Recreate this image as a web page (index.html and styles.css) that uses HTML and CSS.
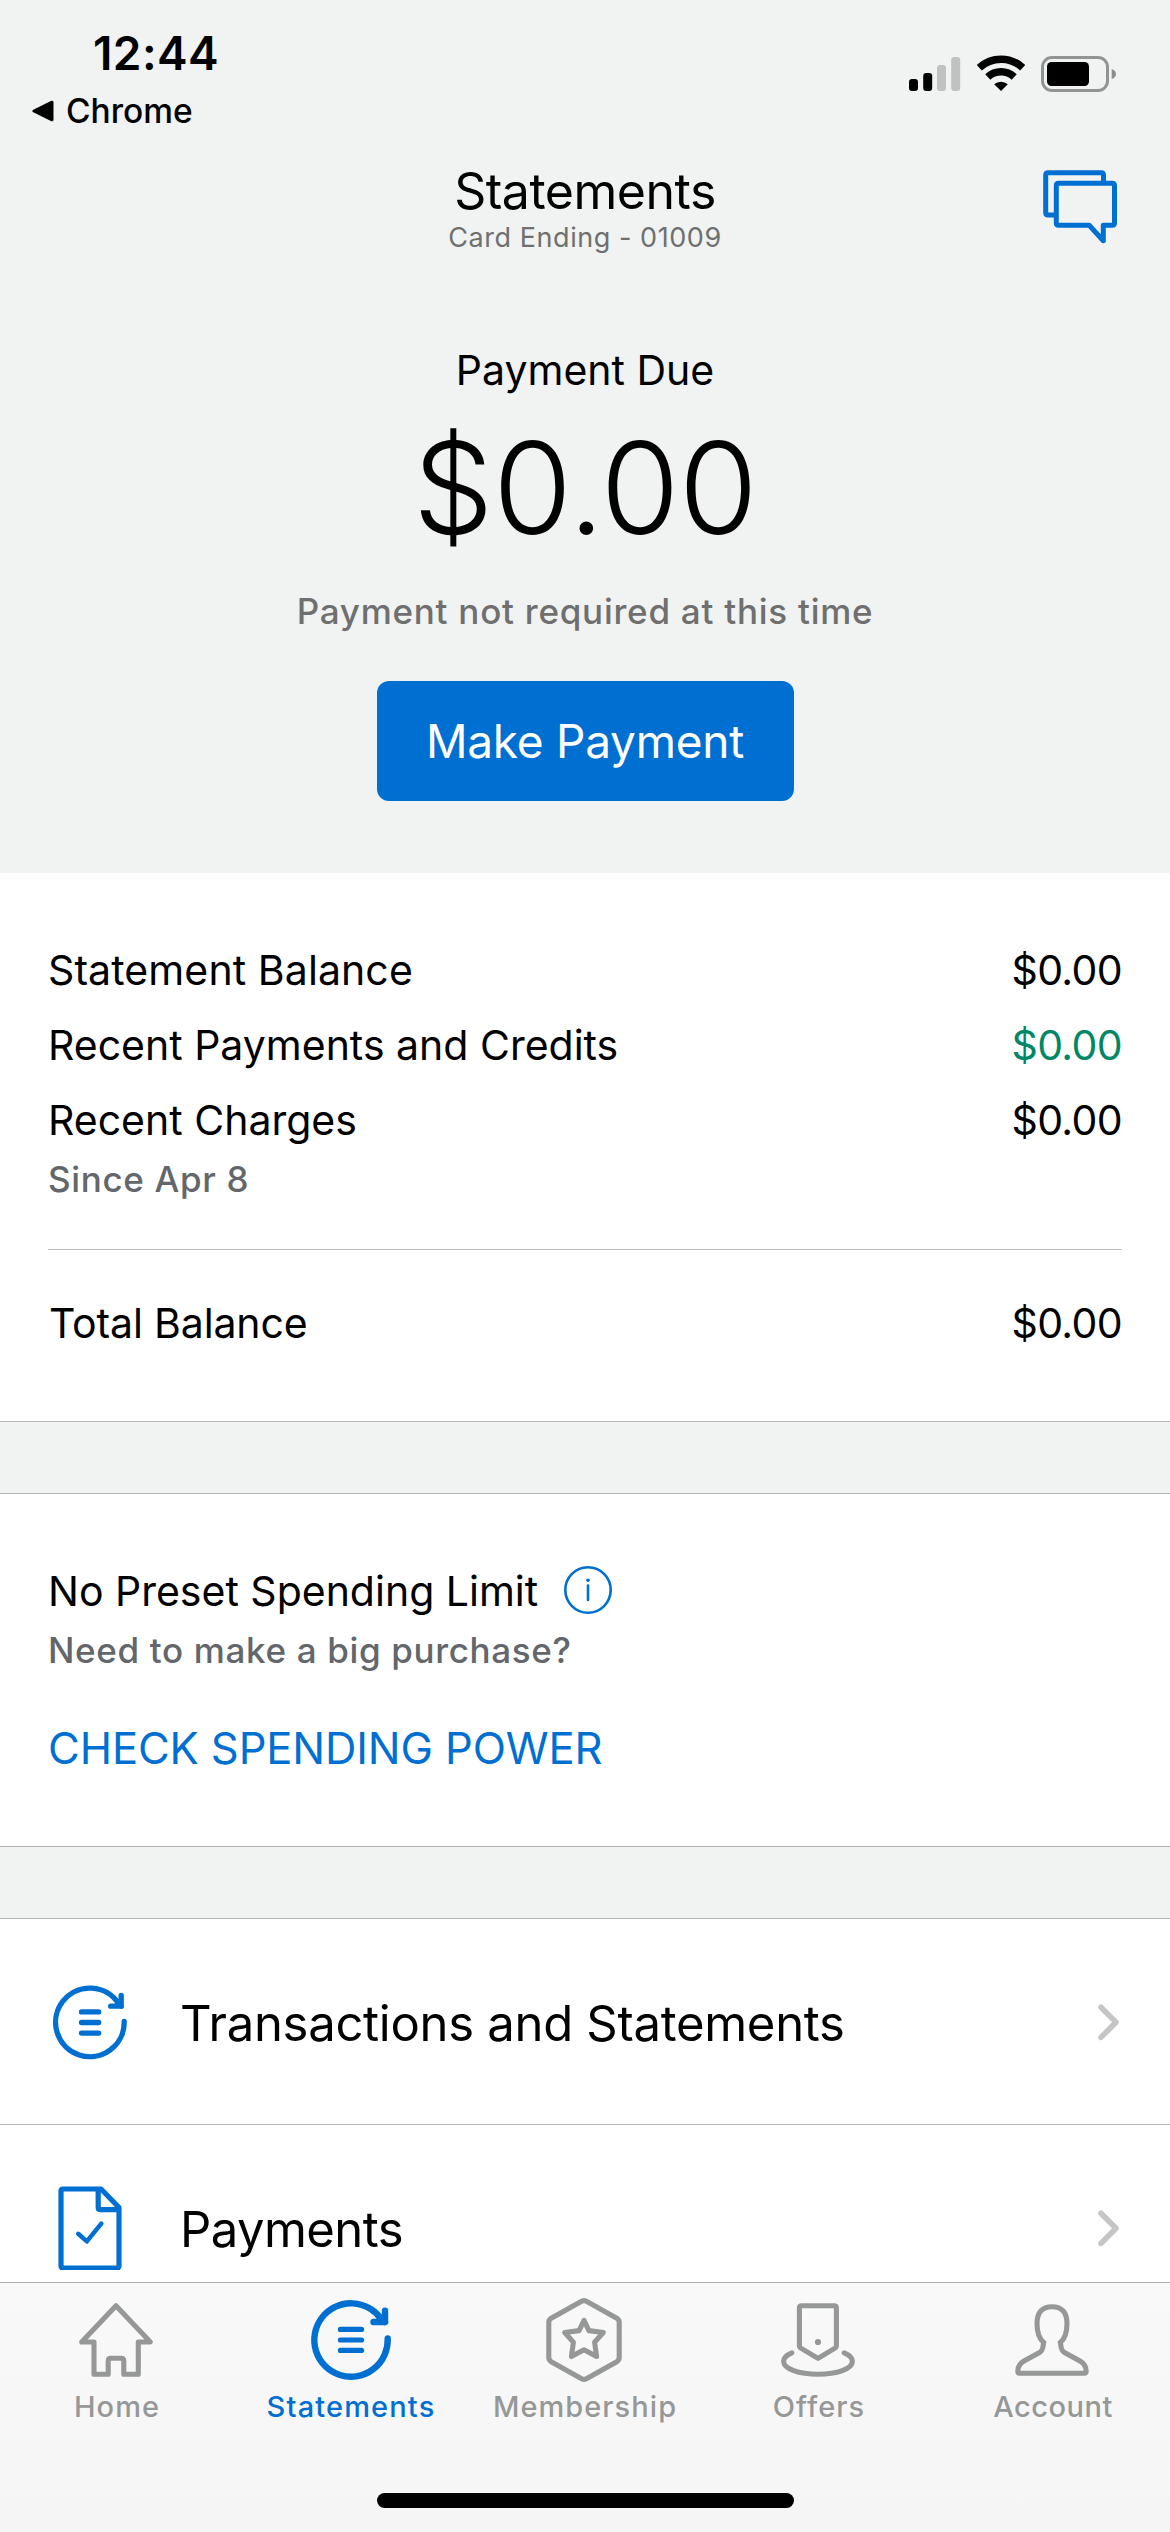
FILE: index.html
```html
<!DOCTYPE html>
<html lang="en">
<head>
<meta charset="utf-8">
<title>Statements</title>
<link rel="stylesheet" href="styles.css">
</head>
<body>
<div class="screen">
  <main class="content">
    <section class="hero">
      <div class="status">
        <div class="status-left">
          <div class="clock">12:44</div>
          <div class="back">
            <svg width="22" height="22" viewBox="0 0 22 22"><path d="M2 11L20 2.2V19.8Z" fill="#000" stroke="#000" stroke-width="3" stroke-linejoin="round"/></svg>
            <span>Chrome</span>
          </div>
        </div>
        <div class="status-right">
          <svg width="52" height="38" viewBox="0 0 52 38"><rect y="24" width="9" height="12" rx="3"/><rect x="14.2" y="18" width="9" height="18" rx="3"/><rect x="28" y="10" width="9" height="26" rx="3" fill="#c0c1c1"/><rect x="42.2" y="2" width="9" height="34" rx="3" fill="#c0c1c1"/></svg>
          <svg width="48" height="38" viewBox="0 0 48 38"><g fill="none" stroke="#000" stroke-width="7.5"><path d="M2.3 12.7A31.8 31.8 0 0 1 45.7 12.7"/><path d="M10.8 21.9A19.3 19.3 0 0 1 37.2 21.9"/></g><path d="M24 36L17.2 29.2A10.5 10.5 0 0 1 30.8 29.2Z"/></svg>
          <svg width="76" height="38" viewBox="0 0 76 38"><rect x="1.5" y="2.5" width="65" height="33" rx="9.5" fill="none" stroke="#929393" stroke-width="3"/><rect x="6" y="7" width="42" height="24" rx="4.5"/><path d="M70.7 14Q75 15.5 75 19T70.7 24Z" fill="#8c8d8d"/></svg>
        </div>
      </div>
      <header class="header">
        <div class="titles">
          <h1 class="title">Statements</h1>
          <p class="card-ending">Card Ending - 01009</p>
        </div>
        <svg class="chat" width="78" height="78" viewBox="0 0 78 78" fill="none" stroke="#006fd2" stroke-width="5" stroke-linejoin="round"><path d="M17.5 15.3H71.3Q73.5 15.3 73.5 17.5V55.1Q73.5 57.3 71.3 57.3H62.3V72.7L48.2 57.3H17.5Q15.3 57.3 15.3 55.1V17.5Q15.3 15.3 17.5 15.3Z"/><path d="M62.5 15.3V7Q62.5 4.7 60.2 4.7H7Q4.7 4.7 4.7 7V44.7Q4.7 47 7 47H15.3"/></svg>
      </header>
      <p class="due-label">Payment Due</p>
      <p class="due-amount">$0.00</p>
      <p class="due-note">Payment not required at this time</p>
      <button class="pay">Make Payment</button>
    </section>

    <section class="balances">
      <div class="row"><span class="statement">Statement Balance</span><span class="amount">$0.00</span></div>
      <div class="row"><span>Recent Payments and Credits</span><span class="amount credit">$0.00</span></div>
      <div class="row"><span>Recent Charges</span><span class="amount">$0.00</span></div>
      <p class="sub since">Since Apr 8</p>
      <hr class="rule">
      <div class="row total"><span>Total Balance</span><span class="amount">$0.00</span></div>
    </section>

    <section class="spending">
      <div class="limit">
        <span>No Preset Spending Limit</span>
        <svg width="48" height="48" viewBox="0 0 48 48"><circle cx="24" cy="24" r="22.7" fill="none" stroke="#006fd2" stroke-width="2.6"/><circle cx="24" cy="14.3" r="1.8" fill="#006fd2"/><path d="M24 19.5V34" stroke="#006fd2" stroke-width="2.6" stroke-linecap="round"/></svg>
      </div>
      <p class="sub">Need to make a big purchase?</p>
      <a class="link">CHECK SPENDING POWER</a>
    </section>

    <section class="menu">
      <div class="item">
        <svg width="84" height="84" viewBox="0 0 84 84" fill="none" stroke="#006fd2" stroke-width="5.3" stroke-linecap="round" stroke-linejoin="round"><path d="M76.2 41.5A34.3 34.3 0 1 1 71 24.2"/><path d="M73.2 15.5V26.2H62.7"/><path d="M70 23L73.2 26.2"/><path d="M33.5 31.9H50.7M33.5 42.5H50.7M33.5 53.1H50.7"/></svg>
        <span class="item-label">Transactions and Statements</span>
        <svg width="24" height="40" viewBox="0 0 24 40" fill="none" stroke="#c5c5c5" stroke-width="5.6" stroke-linecap="round" stroke-linejoin="round"><path d="M3 5.2L18 20.3L3 35.4"/></svg>
      </div>
      <div class="item">
        <svg width="84" height="84" viewBox="0 0 84 84" fill="none" stroke="#006fd2" stroke-width="5.2" stroke-linecap="round" stroke-linejoin="round"><path d="M15 3H53L71 21.5V80Q71 82 69 82H15Q13 82 13 80V5Q13 3 15 3Z"/><path d="M50.2 4V21.5Q50.2 23.7 52.4 23.7H70"/><path d="M30.2 47.8L38.8 55.4L53.3 37.6" stroke-width="4.5"/></svg>
        <span class="item-label payments">Payments</span>
        <svg width="24" height="40" viewBox="0 0 24 40" fill="none" stroke="#c5c5c5" stroke-width="5.6" stroke-linecap="round" stroke-linejoin="round"><path d="M3 5.2L18 20.3L3 35.4"/></svg>
      </div>
    </section>
  </main>

  <nav class="tabbar">
    <div class="tabs">
      <div class="tab">
        <svg class="tab-icon" viewBox="0 0 96 96"><path d="M47 13.7L81.3 50H69.3V82.2H54.8V69Q54.8 66.3 52.1 66.3H41.9Q39.2 66.3 39.2 69V82.2H25V50H12.7Z"/></svg>
        <span>Home</span>
      </div>
      <div class="tab active">
        <svg class="tab-icon" viewBox="0 0 96 96"><g class="cycle"><path d="M84.7 46.5A36.7 36.7 0 1 1 79 28.3"/><path d="M82 18.7V30H70.5"/><path d="M78 26L82 30"/></g><path d="M37.4 37.4H58.6M37.4 48H58.6M37.4 58.4H58.6"/></svg>
        <span>Statements</span>
      </div>
      <div class="tab">
        <svg class="tab-icon" viewBox="0 0 96 96"><path d="M44.6 9.3Q47 8 49.4 9.3L79.8 26.3Q82.2 27.7 82.2 30.4V65.6Q82.2 68.3 79.8 69.7L49.4 86.7Q47 88 44.6 86.7L14.2 69.7Q11.8 68.3 11.8 65.6V30.4Q11.8 27.7 14.2 26.3Z"/><path d="M47 28.3L51.9 38.6L66.3 40.5L57.6 50.2L59.6 64.5L47 57.7L34.4 64.5L36.4 50.2L27.7 40.5L42.1 38.6Z"/></svg>
        <span>Membership</span>
      </div>
      <div class="tab">
        <svg class="tab-icon" viewBox="0 0 96 96"><path d="M30.6 13.7H63.2Q65.4 13.7 65.4 15.9V54Q65.4 55.2 64.4 55.9L47 66.4L29.4 55.9Q28.4 55.2 28.4 54V15.9Q28.4 13.7 30.6 13.7Z"/><circle class="dot" cx="47" cy="50" r="3.1"/><path d="M20.8 60.8C15.5 63 12.6 66 12.6 69.3C12.6 77 28 82.2 47 82.2S81.4 77 81.4 69.3C81.4 66 78.5 63 73.2 60.8"/></svg>
        <span>Offers</span>
      </div>
      <div class="tab account">
        <svg class="tab-icon" viewBox="0 0 96 96"><path stroke-linejoin="miter" d="M47 14.7C37 14.7 32 20.5 32 31.5C32 41 34.5 47 38.7 50.5L37.7 56Q37 59 35 60.2L19 69Q12.8 72.5 12.8 79.3Q12.8 81.2 14.8 81.2H79.2Q81.2 81.2 81.2 79.3Q81.2 72.5 75 69L59 60.2Q57 59 56.3 56L55.3 50.5C59.5 47 62 41 62 31.5C62 20.5 57 14.7 47 14.7Z"/></svg>
        <span>Account</span>
      </div>
    </div>
    <div class="home-indicator"></div>
  </nav>
</div>
</body>
</html>
```
FILE: styles.css
```css
* { box-sizing: border-box; margin: 0; padding: 0; }
body {
  font-family: Inter, "Liberation Sans", sans-serif;
  color: #000;
  background: #fff;
}
svg { display: block; flex: none; }
.screen {
  width: 1170px;
  height: 2532px;
  display: flex;
  flex-direction: column;
  overflow: hidden;
}
.content {
  flex: 1;
  min-height: 0;
  overflow: hidden;
  background: #f0f3f2;
}

/* Header and amount due */
.hero {
  height: 873px;
  display: flex;
  flex-direction: column;
  align-items: center;
  text-align: center;
}
.status {
  width: 100%;
  height: 161px;
  padding: 25px 54px 0 32px;
  display: flex;
  justify-content: space-between;
}
.status-left { display: flex; flex-direction: column; align-items: flex-start; gap: 10px; }
.clock {
  padding-left: 61px;
  font-size: 46px;
  line-height: 56px;
  font-weight: 600;
  letter-spacing: 0.4px;
}
.back {
  display: flex;
  align-items: center;
  gap: 12px;
  font-size: 33.5px;
  line-height: 40px;
  font-weight: 450;
  letter-spacing: 0;
}
.status-right { display: flex; gap: 16px; padding-top: 30px; height: 68px; margin-right: -1px; }
.header {
  width: 100%;
  height: 92px;
  padding: 0 51px;
  display: grid;
  grid-template-columns: 1fr auto 1fr;
}
.titles { grid-column: 2; }
.title { font-size: 50px; line-height: 60px; font-weight: 400; letter-spacing: -0.48px; }
.card-ending { padding-top: 1px; font-size: 27px; line-height: 32px; color: #6f6f6f; letter-spacing: 0.55px; }
.chat { justify-self: end; margin-top: 7px; }
.due-label { margin-top: 92px; font-size: 41px; line-height: 50px; }
.due-amount {
  margin-top: 18px;
  font-size: 128px;
  line-height: 150px;
  font-weight: 300;
  letter-spacing: -0.66px;
}
.due-note {
  margin-top: 26px;
  font-size: 35px;
  line-height: 44px;
  font-weight: 500;
  color: #6f6f6f;
  letter-spacing: 0.75px;
}
.pay {
  margin-top: 48px;
  width: 417px;
  height: 120px;
  border: 0;
  border-radius: 12px;
  background: #006fd2;
  color: #fff;
  font: 400 46px/56px Inter, "Liberation Sans", sans-serif;
  letter-spacing: -0.24px;
}

/* Balance list */
.balances {
  height: 549px;
  padding: 60px 48px 0;
  border-bottom: 1px solid #b4b6b6;
  font-size: 41px;
  background: #fff;
}
.row {
  display: flex;
  justify-content: space-between;
  line-height: 75px;
}
.statement { letter-spacing: 0.1px; }
.amount { letter-spacing: -0.62px; }
.credit { color: #008767; }
.sub {
  font-size: 35px;
  line-height: 44px;
  font-weight: 500;
  color: #63666a;
  letter-spacing: 0.65px;
}
.since { margin-top: -1px; }
.rule { margin: 48px 0 36px; border: 0; height: 1px; background: #bcbebe; }
.total { padding-left: 1px; letter-spacing: -0.14px; }

/* Spending limit */
.spending {
  margin-top: 71px;
  height: 354px;
  padding: 72px 48px 0;
  border-top: 1px solid #b4b6b6;
  border-bottom: 1px solid #b4b6b6;
  background: #fff;
}
.limit {
  display: flex;
  align-items: center;
  gap: 26px;
  margin-bottom: 12px;
  font-size: 41px;
  line-height: 50px;
}
.limit svg { margin-top: -2px; }
.link {
  display: block;
  margin-top: 49px;
  font-size: 43.5px;
  line-height: 54px;
  letter-spacing: -0.11px;
  color: #006fd2;
}

/* Navigation list */
.menu { margin-top: 71px; border-top: 1px solid #b4b6b6; background: #fff; }
.item {
  height: 206px;
  padding: 0 48px;
  border-bottom: 1px solid #b4b6b6;
  display: flex;
  align-items: center;
}
.item-label {
  flex: 1;
  padding: 4px 0 0 48px;
  font-size: 49px;
  line-height: 60px;
  letter-spacing: -0.29px;
}
.payments { letter-spacing: -0.55px; }

/* Tab bar */
.tabbar {
  flex: none;
  height: 250px;
  padding-top: 9px;
  border-top: 1px solid #adaeae;
  background: linear-gradient(#f9f9f9, #f5f5f6);
  display: flex;
  flex-direction: column;
  align-items: center;
}
.tabs { width: 100%; display: grid; grid-template-columns: repeat(5, 1fr); }
.tab {
  display: flex;
  flex-direction: column;
  align-items: center;
  gap: 2px;
  font-size: 29px;
  line-height: 34px;
  font-weight: 500;
  letter-spacing: 1.05px;
  color: #969797;
}
.account { letter-spacing: 0.51px; }
.active { color: #006fd2; font-weight: 550; letter-spacing: 1.15px; }
.tab-icon {
  width: 96px;
  height: 96px;
  fill: none;
  stroke: currentColor;
  stroke-width: 5.1px;
  stroke-linecap: round;
  stroke-linejoin: round;
}
.cycle { stroke-width: 6.4px; }
.dot { fill: currentColor; stroke: none; }
.home-indicator {
  margin-top: 69px;
  width: 417px;
  height: 15px;
  border-radius: 8px;
  background: #000;
}
```
